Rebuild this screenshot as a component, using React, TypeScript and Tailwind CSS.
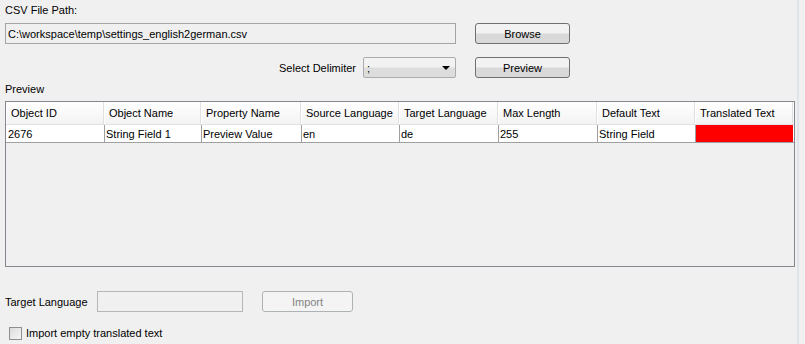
const columns = [
  { name: "Object ID", w: "w-[98px]" },
  { name: "Object Name", w: "w-[97px]" },
  { name: "Property Name", w: "w-[100px]" },
  { name: "Source Language", w: "w-[98px]" },
  { name: "Target Language", w: "w-[99px]" },
  { name: "Max Length", w: "w-[99px]" },
  { name: "Default Text", w: "w-[98px]" },
  { name: "Translated Text", w: "w-[98px]" },
];

const row = ["2676", "String Field 1", "Preview Value", "en", "de", "255", "String Field", ""];

function Button({ label, disabled }: { label: string; disabled?: boolean }) {
  return (
    <div
      className={
        disabled
          ? "flex h-[21px] w-[91px] items-center justify-center rounded-[3px] border border-[#adb2b5] bg-[#f4f4f4] text-[#838383]"
          : "flex h-[21px] w-[95px] items-center justify-center rounded-[3px] border border-[#707070] bg-gradient-to-b from-[#f2f2f2] from-45% to-[#d9d9d9] to-55% text-black"
      }
    >
      {label}
    </div>
  );
}

export default function App() {
  return (
    <div
      className="flex h-[344px] w-[805px] bg-[#f0f0f0] text-[11px] leading-[14px] text-black"
      style={{ fontFamily: '"Liberation Sans", Arial, sans-serif' }}
    >
      <div className="flex w-[797px] flex-col pl-[5px]">
        <div className="pt-[3px]">CSV File Path:</div>
        <div className="mt-[6px] flex items-center gap-[19px]">
          <div className="flex h-[21px] w-[451px] items-center border border-[#a5a5a5] bg-[#f0f0f0] pl-[2px]">
            C:\workspace\temp\settings_english2german.csv
          </div>
          <Button label="Browse" />
        </div>
        <div className="mt-[13px] flex items-center">
          <div className="ml-[274px] w-[84px]">Select Delimiter</div>
          <div className="flex h-[21px] w-[93px] items-center justify-between rounded-[2px] border border-[#acacac] bg-gradient-to-b from-[#f2f2f2] from-45% to-[#dddddd] to-55% pl-[3px] pr-[5px]">
            <span>;</span>
            <svg width="8" height="4" viewBox="0 0 8 4">
              <path d="M0 0h8L4 4z" fill="#000" />
            </svg>
          </div>
          <div className="ml-[19px]">
            <Button label="Preview" />
          </div>
        </div>
        <div className="mt-[4px]">Preview</div>
        <div className="mt-[5px] flex h-[166px] w-[790px] flex-col border border-[#828790] bg-[#f0f0f0]">
          <div className="flex h-[23px] border-b border-[#e3e3e3] bg-gradient-to-b from-white to-[#f3f3f3]">
            {columns.map((c) => (
              <div
                key={c.name}
                className={`${c.w} flex items-center border-r border-[#e0e0e0] border-l border-l-white pl-[4px]`}
              >
                {c.name}
              </div>
            ))}
          </div>
          <div className="flex h-[18px] border-b border-[#a0a0a0] bg-white">
            {row.map((v, i) => (
              <div
                key={i}
                className={`${columns[i].w} flex items-center border-l border-[#a0a0a0] pl-[1px] ${
                  i === 7 ? "bg-[#ff0000]" : ""
                } ${i === 0 ? "border-l-white" : ""}`}
              >
                {v}
              </div>
            ))}
          </div>
        </div>
        <div className="mt-[24px] flex items-center">
          <div className="w-[92px]">Target Language</div>
          <div className="h-[21px] w-[146px] border border-[#b6b6b6] bg-[#f0f0f0]" />
          <div className="ml-[19px]">
            <Button label="Import" disabled />
          </div>
        </div>
        <div className="mt-[14px] flex items-center pl-[4px]">
          <div className="h-[13px] w-[13px] border border-[#8e8f8f] bg-gradient-to-br from-[#dcdcdc] to-[#f6f6f6]" />
          <span className="ml-[4px]">Import empty translated text</span>
        </div>
      </div>
      <div className="h-full w-[2px] bg-[#dfe4ea]" />
      <div className="flex-1" />
    </div>
  );
}
